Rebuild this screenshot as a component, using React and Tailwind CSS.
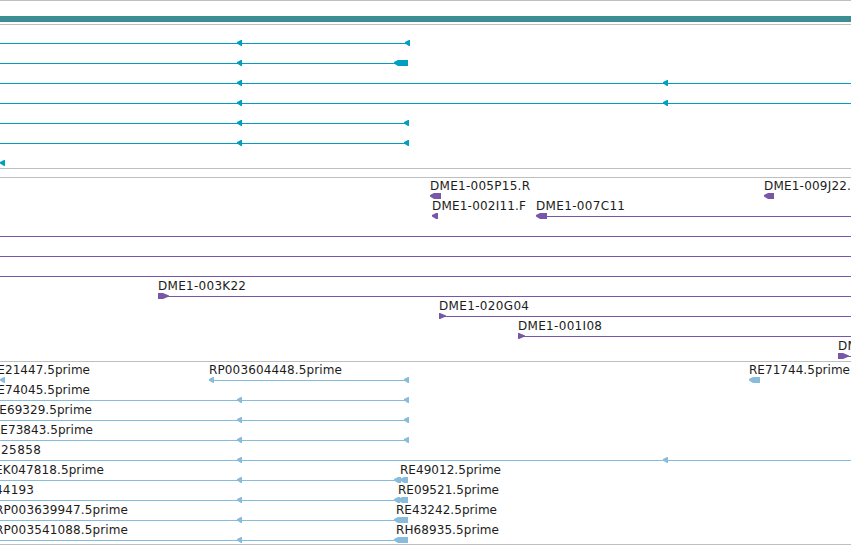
const WIDTH = 851;

// feature shapes: [kind, start, end]
const L = (x, end = x + 5) => ['left', x, end];
const R = (x, end = x + 5) => ['right', x, end];

const genes = [
  { lines: [[0, 410]], shapes: [L(237), L(405)] },
  { lines: [[0, 408]], shapes: [L(237), L(394, 408)] },
  { lines: [[0, WIDTH]], shapes: [L(237), L(663, 668)] },
  { lines: [[0, WIDTH]], shapes: [L(237), L(663, 668)] },
  { lines: [[0, 409]], shapes: [L(237), L(404)] },
  { lines: [[0, 409]], shapes: [L(237), L(404)] },
  { shapes: [L(0)] },
];

// labels: [text, left, width]
const clones = [
  {
    labels: [['DME1-005P15.R', 430, 100], ['DME1-009J22.F', 764, 94]],
    shapes: [L(430, 441), L(764, 774)],
  },
  {
    labels: [['DME1-002I11.F', 432, 94], ['DME1-007C11', 536, 89]],
    lines: [[541, WIDTH]],
    shapes: [L(432, 438), L(536, 547)],
  },
  { lines: [[0, WIDTH]] },
  { lines: [[0, WIDTH]] },
  { lines: [[0, WIDTH]] },
  { labels: [['DME1-003K22', 158, 88]], lines: [[158, WIDTH]], shapes: [R(158, 169)] },
  { labels: [['DME1-020G04', 439, 90]], lines: [[439, WIDTH]], shapes: [R(439, 446)] },
  { labels: [['DME1-001I08', 518, 84]], lines: [[518, WIDTH]], shapes: [R(518, 525)] },
  { labels: [['DME1-021A07', 838, 89]], lines: [[838, WIDTH]], shapes: [R(838, 849)] },
];

const ests = [
  {
    labels: [['RE21447.5prime', -11, 101], ['RP003604448.5prime', 209, 133], ['RE71744.5prime', 749, 101]],
    lines: [[209, 409]],
    shapes: [L(0), L(209), L(404), L(749, 760)],
  },
  { labels: [['RE74045.5prime', -11, 101]], lines: [[0, 409]], shapes: [L(237), L(404)] },
  { labels: [['RE69329.5prime', -9, 101]], lines: [[0, 409]], shapes: [L(237), L(404)] },
  { labels: [['RE73843.5prime', -8, 101]], lines: [[0, 409]], shapes: [L(237), L(404)] },
  { labels: [['25858', 1, 40]], lines: [[0, WIDTH]], shapes: [L(237), L(663, 668)] },
  {
    labels: [['EK047818.5prime', -5, 109], ['RE49012.5prime', 400, 101]],
    lines: [[0, 408]],
    shapes: [L(237), L(394, 401), L(400, 408)],
  },
  {
    labels: [['44193', -5, 39], ['RE09521.5prime', 398, 101]],
    lines: [[0, 408]],
    shapes: [L(237), L(394, 400), L(398, 408)],
  },
  {
    labels: [['RP003639947.5prime', -5, 133], ['RE43242.5prime', 396, 101]],
    lines: [[0, 408]],
    shapes: [L(237), L(394, 400), L(396, 408)],
  },
  {
    labels: [['RP003541088.5prime', -5, 133], ['RH68935.5prime', 396, 103]],
    lines: [[0, 408]],
    shapes: [L(237), L(394, 400), L(396, 408)],
  },
];

const outline = ([kind, a, b]) =>
  kind === 'left'
    ? `${a},3.5 ${a},2 ${a + 4},0 ${b},0 ${b},6 ${a + 4},6`
    : `${a},0 ${b - 6},0 ${b},2.5 ${b},3.5 ${b - 6},6 ${a},6`;

const Lane = ({ labels = [], lines = [], shapes = [] }) => (
  <div className="relative flex h-5 flex-col justify-end">
    {labels.map(([text, left, width]) => (
      <svg
        key={text}
        className="absolute top-0 h-4 overflow-visible"
        style={{ left, width }}
      >
        <text
          x="0"
          y="12"
          textLength={width}
          className="fill-[#1c1c1c] font-['DejaVu_Sans',sans-serif] text-[12px]"
        >
          {text}
        </text>
      </svg>
    ))}
    <svg width={WIDTH} height="5" className="block shrink-0 overflow-visible">
      {lines.map(([a, b]) => (
        <rect key={a} x={a} y="3" width={b - a} height="1" fill="currentColor" />
      ))}
      {shapes.map((s) => (
        <polygon key={s[1]} points={outline(s)} fill="currentColor" />
      ))}
    </svg>
  </div>
);

const Track = ({ lanes, className }) => (
  <section className={`border-t border-[#bfbfbf] ${className}`}>
    {lanes.map((lane, i) => (
      <Lane key={i} {...lane} />
    ))}
  </section>
);

export default function App() {
  return (
    <main className="flex h-[545px] w-[851px] flex-col overflow-hidden bg-white">
      <header className="h-6 border-t border-[#bfbfbf] pt-[15px]">
        <div className="h-1.5 bg-[#3d8e94]" />
      </header>
      <Track lanes={genes} className="h-36 text-[#009ebf]" />
      <div className="h-[9px] border-t border-[#bfbfbf]" />
      <Track lanes={clones} className="h-[184px] text-[#7857a8]" />
      <Track lanes={ests} className="h-[184px] border-b text-[#87bcdd]" />
    </main>
  );
}
